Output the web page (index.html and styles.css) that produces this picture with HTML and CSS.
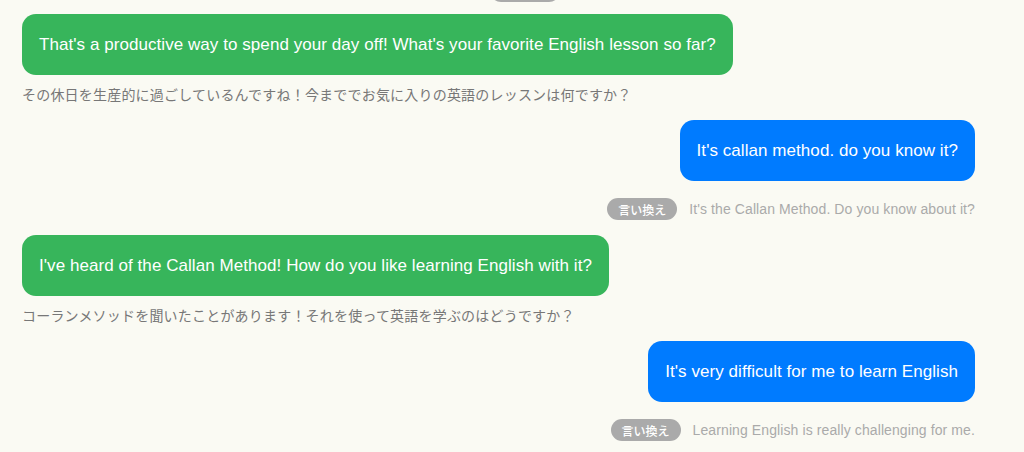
FILE: index.html
```html
<!DOCTYPE html>
<html lang="ja">
<head>
<meta charset="utf-8">
<title>Chat</title>
<link rel="stylesheet" href="styles.css">
</head>
<body>
<div class="chat">
  <div class="para para-cut">
    <span class="badge">言い換え</span>
    <span class="para-text">I spend my day off studying English with an online course today.</span>
  </div>

  <div class="row ai">
    <div class="bubble green">That's a productive way to spend your day off! What's your favorite English lesson so far?</div>
    <div class="caption">その休日を生産的に過ごしているんですね！今まででお気に入りの英語のレッスンは何ですか？</div>
  </div>

  <div class="row user">
    <div class="bubble blue">It's callan method. do you know it?</div>
    <div class="para">
      <span class="badge">言い換え</span>
      <span class="para-text">It's the Callan Method. Do you know about it?</span>
    </div>
  </div>

  <div class="row ai">
    <div class="bubble green">I've heard of the Callan Method! How do you like learning English with it?</div>
    <div class="caption">コーランメソッドを聞いたことがあります！それを使って英語を学ぶのはどうですか？</div>
  </div>

  <div class="row user">
    <div class="bubble blue">It's very difficult for me to learn English</div>
    <div class="para">
      <span class="badge">言い換え</span>
      <span class="para-text">Learning English is really challenging for me.</span>
    </div>
  </div>
</div>
</body>
</html>
```

FILE: styles.css
```css
html, body {
  margin: 0;
  padding: 0;
  background: #fafaf3;
  overflow: hidden;
}

.chat {
  display: flex;
  flex-direction: column;
  padding: 0 49px 0 22px;
  font-family: "Liberation Sans", Arial, "Noto Sans CJK JP", sans-serif;
}

.row {
  display: flex;
  flex-direction: column;
}

.row.ai {
  align-items: flex-start;
  margin-bottom: 16px;
}

.row.user {
  align-items: flex-end;
  margin-bottom: 15px;
}

.bubble {
  padding: 20px 17px;
  font-size: 17px;
  line-height: 21px;
  letter-spacing: 0.06px;
  color: #ffffff;
  border-radius: 14px;
}

.bubble.green {
  background: #37b55b;
}

.bubble.blue {
  background: #007bff;
}

.caption {
  margin-top: 9px;
  font-family: "Noto Sans CJK JP", sans-serif;
  font-size: 14px;
  line-height: 20px;
  letter-spacing: 0.2px;
  color: #777777;
}

.para {
  display: flex;
  align-items: center;
  justify-content: flex-end;
  gap: 12px;
  margin-top: 17px;
  height: 22px;
}

.para-cut {
  margin-top: -20px;
  margin-bottom: 12px;
}

.badge {
  display: inline-flex;
  align-items: center;
  justify-content: center;
  height: 22px;
  padding: 0 11px;
  border-radius: 11px;
  background: #aaaaaa;
  color: #ffffff;
  font-family: "Noto Sans CJK JP", sans-serif;
  font-size: 12px;
  font-weight: 500;
}

.para-text {
  font-size: 14px;
  letter-spacing: 0.1px;
  color: #aaaaaa;
}
```
